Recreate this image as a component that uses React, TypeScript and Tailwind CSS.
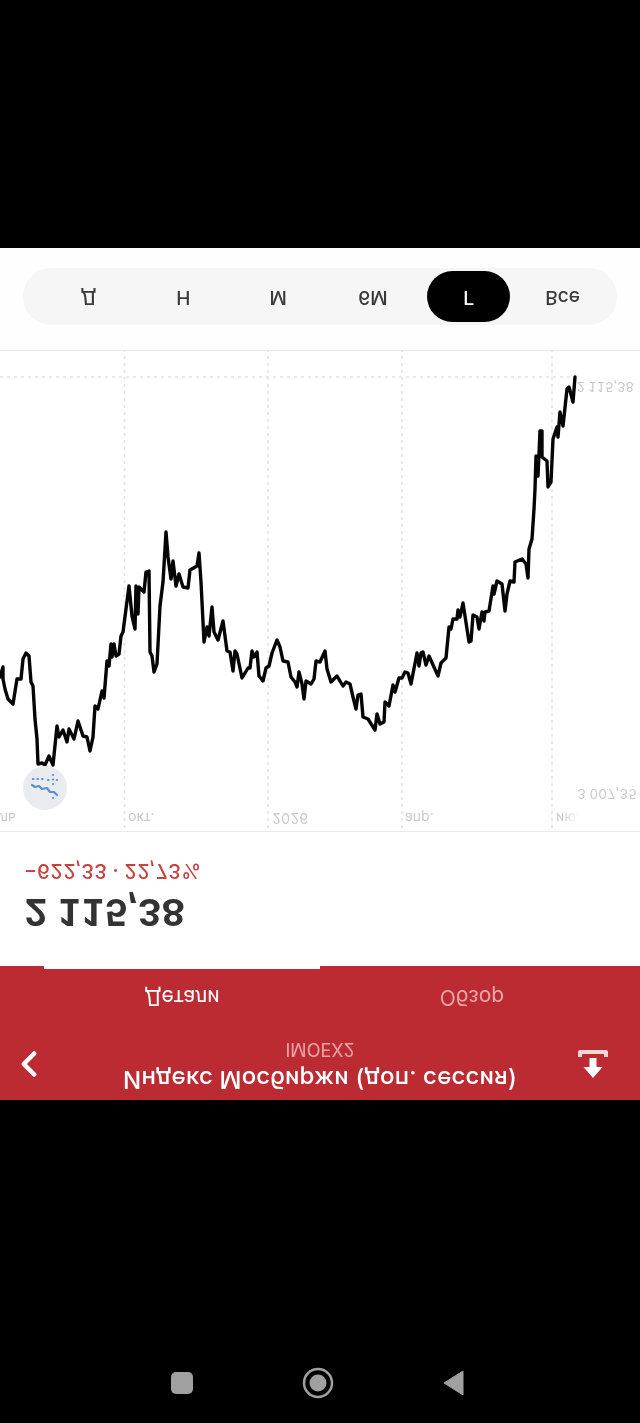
import { ChevronLeft } from 'lucide-react';

const ranges = ['Д', 'Н', 'М', '6М', 'Г', 'Все'];

// points read off the screenshot, in page coordinates
const line =
  '0,678 3,668 3,680 5,690 8,700 13,705 17,680 21,680 23,660 26,654 29,657 31,683 33,687 35,720 37,740 38,765 42,764 45,766 49,757 53,766 57,727 59,738 63,731 67,743 69,730 74,740 78,722 83,737 87,738 90,752 93,738 95,707 98,710 102,692 104,699 107,662 109,667 111,645 112,658 114,645 116,657 119,655 121,637 123,633 126,610 129,587 132,617 135,630 136,587 138,615 139,588 144,593 146,573 149,572 150,653 152,657 154,673 157,665 160,607 163,583 166,533 168,558 171,580 173,562 176,587 179,575 183,588 188,589 190,571 197,567 199,554 201,583 204,643 207,628 209,637 212,608 214,633 218,641 223,622 227,652 230,653 233,672 235,652 237,655 242,679 248,669 250,669 252,652 254,658 257,653 259,677 263,682 266,669 269,667 272,654 277,641 280,648 283,662 288,663 291,678 295,683 297,688 299,673 302,685 304,700 306,682 311,685 314,680 316,662 320,663 325,652 327,670 331,683 337,677 343,687 346,683 350,685 353,698 356,710 358,696 361,695 363,718 368,720 375,731 377,715 380,725 384,723 385,703 389,707 393,686 395,693 399,679 402,679 405,673 408,674 411,685 417,654 419,667 421,654 423,653 426,666 429,657 438,677 441,664 446,659 449,628 451,630 453,620 457,620 458,611 460,618 463,604 469,643 471,642 473,616 477,618 479,630 482,613 484,622 485,613 489,612 493,587 494,595 497,582 502,585 505,612 507,595 510,582 514,583 515,563 522,560 526,565 528,579 529,550 532,540 534,510 535,490 536,457 538,477 540,432 542,432 542,458 547,462 548,488 551,483 553,440 557,428 558,438 560,413 563,427 567,390 569,388 573,403 575,378';

const gridX = [124.5, 268, 402, 552];

function RangeSwitch() {
  return (
    <div className="h-[102px] bg-[#fefefe] px-[23px] pt-[25px]">
      <div className="grid h-[57px] grid-cols-6 items-center rounded-[28px] bg-[#f6f6f6] pl-[18px] pr-[7px] text-[19px] font-medium">
        {ranges.map((r) =>
          r === 'Г' ? (
            <div key={r} className="ml-[7px] flex h-[51px] w-[83px] items-center justify-center rounded-[26px] bg-black text-white">
              {r}
            </div>
          ) : (
            <div key={r} className="text-center text-[#3a3a3a]">
              {r}
            </div>
          )
        )}
      </div>
    </div>
  );
}

function Chart() {
  return (
    <div className="relative h-[482px] overflow-hidden border-y border-[#e9e9e9] bg-white text-[14px] tabular-nums text-[#c9c9c9]">
      <svg width="640" height="482" className="absolute left-0 top-0">
        <g transform="matrix(1 0 0 -1 0 832)">
          {gridX.map((x) => (
            <line key={x} x1={x} x2={x} y1="350" y2="832" stroke="#e2e2e2" strokeWidth="1.5" strokeDasharray="3 4" />
          ))}
          <line x1="0" x2="575" y1="378" y2="378" stroke="#e2e2e2" strokeWidth="1.5" strokeDasharray="3 4" />
          <polyline points={line} fill="none" stroke="#050505" strokeWidth="3.4" strokeLinejoin="round" strokeLinecap="round" />
        </g>
      </svg>

      <div className="absolute inset-x-0 top-[3px] flex leading-5">
        <span className="w-[128px]">ль</span>
        <span className="w-[144px]">окт.</span>
        <span className="w-[133px]">2026</span>
        <span className="w-[151px]">апр.</span>
        <span className="bg-gradient-to-r from-[#c9c9c9] from-20% to-transparent to-65% bg-clip-text text-transparent">июль</span>
      </div>
      <span className="absolute right-[3px] top-[27px] text-[13.500px] leading-5">3 007,35</span>
      <span className="absolute right-[6px] top-[434px] text-[13px] leading-5">2 115,38</span>

      <div className="absolute left-[23px] top-[21px] h-[44px] w-[44px] rounded-full bg-[#e9ebef]">
        <svg viewBox="0 0 44 44" width="44" height="44">
          <g transform="matrix(1 0 0 -1 0 44)" fill="none" stroke="#5b8fd0" strokeWidth="2.200" strokeLinecap="round" strokeLinejoin="round">
            <path d="M9 19l3 2 4-1 3 3 5-1 3 4 4 0 3 3" />
            <path d="M10 13h.5M14.500 13h.5M19 13h.5M25 14h.5M30 9h.1M30 13.500h.1M30 18h.1M34 14h.1M30 32h.1" />
          </g>
        </svg>
      </div>
    </div>
  );
}

export default function App() {
  return (
    <div className="flex h-[1423px] w-[640px] flex-col overflow-hidden bg-black font-['Inter',sans-serif]">
      <div className="h-[248px]" />

      {/* the whole app screen is upside down in the picture */}
      <div className="h-[852px] -scale-y-100 overflow-hidden bg-white">
        <div className="bg-[#bc2b32] text-white">
          <div className="flex h-[72px] items-center">
            <div className="w-[64px] pl-[8px]">
              <ChevronLeft size={42} strokeWidth={2.6} />
            </div>
            <div className="flex-1 text-center">
              <div className="whitespace-nowrap text-[24px] font-medium leading-[26px] tracking-[0.2px]">Индекс Мосбиржи (доп. сессия)</div>
              <div className="mt-[3px] text-[18px] leading-[28px] text-[#e9a6a9]">IMOEX2</div>
            </div>
            <div className="w-[64px] pl-[1px]">
              <svg width="32" height="30" viewBox="0 0 32 30" className="block">
                <g transform="matrix(1 0 0 -1 0 30)">
                  <path d="M3 8V3H29V8" fill="none" stroke="#f6d5d6" strokeWidth="4" strokeLinejoin="round" />
                  <path d="M12.500 9h7v9h6L16 29 6.500 18h6z" fill="#fff" />
                </g>
              </svg>
            </div>
          </div>
          <div className="flex h-[62px] pl-[44px] text-[21px]">
            <div className="flex w-[276px] items-center justify-center border-b-[3px] border-white pt-[3px]">Детали</div>
            <div className="ml-[14px] flex w-[276px] items-center justify-center text-[#e9a6a9]">Обзор</div>
          </div>
        </div>

        <div className="h-[134px] bg-white pl-[24px] pt-[32px] tabular-nums">
          <div className="text-[36.500px] font-bold leading-[44px] text-[#333333]">2 115,38</div>
          <div className="mt-[6px] text-[20px] font-medium leading-[26px] text-[#c8423f]">−622,33 · 22,73%</div>
        </div>

        <Chart />
        <RangeSwitch />
      </div>

      <div className="flex gap-[109px] pl-[171px] pt-[272px]">
        <div className="h-[22px] w-[22px] rounded-[5px] bg-[#a0a0a0]" />
        <svg width="32" height="32" viewBox="0 0 32 32" className="-mt-[5px]">
          <circle cx="16" cy="16" r="14" fill="none" stroke="#a0a0a0" strokeWidth="2.500" />
          <circle cx="16" cy="16" r="8.500" fill="#a0a0a0" />
        </svg>
        <svg width="21" height="26" viewBox="0 0 21 26" className="-mt-[2px]">
          <path d="M1 13L20 1V25Z" fill="#a0a0a0" stroke="#a0a0a0" strokeWidth="1" strokeLinejoin="round" />
        </svg>
      </div>
    </div>
  );
}
